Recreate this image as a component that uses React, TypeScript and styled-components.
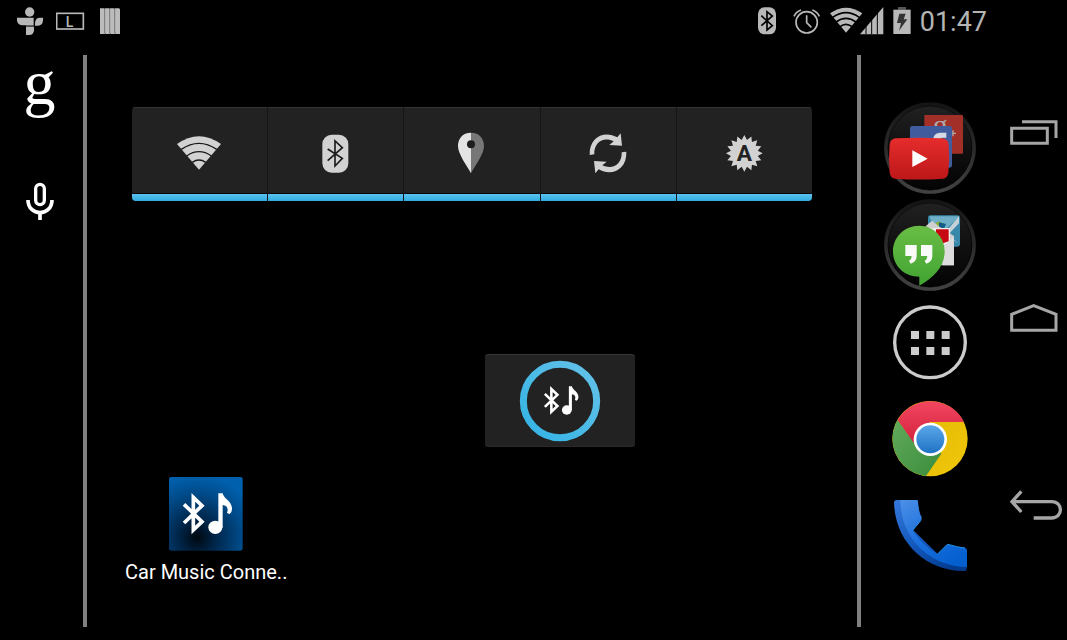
import React from "react";
import styled, { createGlobalStyle } from "styled-components";

const GlobalStyle = createGlobalStyle`
  *, *::before, *::after { box-sizing: border-box; }
  body { margin: 0; background: #000; font-family: Roboto, "Liberation Sans", sans-serif; }
  svg { display: block; flex: none; }
`;

const Screen = styled.div`
  display: flex;
  min-height: 100vh;
  background: #000;
  color: #fff;
`;

const Main = styled.main`
  flex: 1;
  min-width: 0;
  display: flex;
  flex-direction: column;
`;

const StatusBar = styled.header`
  display: flex;
  align-items: center;
  justify-content: space-between;
  height: 42px;
  padding: 0 13px 0 17px;
`;

const StatusGroup = styled.div<{ $gap: number }>`
  display: flex;
  align-items: center;
  gap: ${(p) => p.$gap}px;
`;

const Clock = styled.time`
  padding-top: 2px;
  font-size: 27px;
  line-height: 32px;
  color: #b4b4b4;
`;

const Workspace = styled.div`
  flex: 1;
  display: flex;
  margin: 13px 0;
`;

const IconButton = styled.button`
  display: flex;
  align-items: center;
  justify-content: center;
  padding: 0;
  border: 0;
  background: transparent;
  color: inherit;
  cursor: pointer;
`;

const SearchRail = styled.aside`
  width: 83px;
  padding: 6px 4px 0 0;
  display: flex;
  flex-direction: column;
  align-items: center;
  gap: 76px;
`;

const SearchButton = styled(IconButton)`
  height: 44px;
  font-family: "Liberation Serif", serif;
  font-size: 64px;
  line-height: 44px;
`;

const Desk = styled.section`
  flex: 1;
  min-width: 0;
  display: flex;
  flex-direction: column;
  align-items: flex-start;
  padding: 52px 45px 0 38px;
  border: solid #808080;
  border-width: 0 4px;
`;

const PowerWidget = styled.div`
  align-self: stretch;
  display: grid;
  grid-template-columns: repeat(5, 1fr);
  gap: 1px;
  height: 94px;
  margin-left: 7px;
  border-radius: 4px;
  overflow: hidden;
  background: #161616;
`;

const Toggle = styled(IconButton)`
  flex-direction: column;
  justify-content: space-between;
  padding-top: 12px;
  background: #222;
  border-top: 1px solid #343434;

  &::after {
    content: "";
    width: 100%;
    height: 8px;
    border-top: 1px solid #0c0808;
    background: linear-gradient(#5cc3ef, #30acdf);
  }
`;

const MusicWidget = styled(IconButton)`
  width: 150px;
  height: 93px;
  margin: 153px 0 30px calc(50% + 16px);
  border-radius: 4px;
  background: #222;
  box-shadow: inset 0 1px #383838, inset 0 -1px #2a2a2a;
`;

const Shortcut = styled(IconButton)`
  flex-direction: column;
  gap: 9px;
  font: 20px/24px Roboto, "Liberation Sans", sans-serif;
  white-space: nowrap;
  color: #fff;
`;

const Dock = styled.nav`
  width: 139px;
  padding: 2px 2px 0 0;
  display: flex;
  flex-direction: column;
  align-items: center;
  justify-content: center;
  gap: 5px;
`;

const NavBar = styled.nav`
  width: 67px;
  display: flex;
  flex-direction: column;
  justify-content: center;
  gap: 126px;
`;

type IconProps = { w: number; h: number; box: string; children: React.ReactNode };
const Icon = ({ w, h, box, children }: IconProps) => (
  <svg width={w} height={h} viewBox={box} fill="none" aria-hidden="true">
    {children}
  </svg>
);

const Note = () => (
  <g fill="#fff">
    <ellipse cx="319" cy="187" rx="21" ry="20" />
    <path d="M328 85H341C343 101 370 109 369 132Q369 142 362 147L354 144C360 127 351 121 341 120V188H328Z" />
  </g>
);

const BluetoothNote = () => (
  <>
    <path d="M225 118L279 170L253 195V97L279 122L225 174" stroke="#fff" strokeWidth="11" />
    <Note />
  </>
);

const FolderRing = ({ cy }: { cy: number }) => (
  <>
    <circle cx="180" cy={cy} r="132" fill="url(#folder)" stroke="url(#ring)" strokeWidth="11" />
    <circle cx="180" cy={cy} r="126" stroke="#050505" strokeWidth="2" />
  </>
);

const Gradients = () => (
  <svg width="0" height="0" style={{ position: "absolute" }} aria-hidden="true">
    <defs>
      <linearGradient id="ring" x1="0" y1="0" x2="0" y2="1">
        <stop stopColor="#141414" /><stop offset="1" stopColor="#414141" />
      </linearGradient>
      <linearGradient id="folder" x1="0" y1="0" x2="0" y2="1">
        <stop stopColor="#222" /><stop offset=".5" stopColor="#101010" /><stop offset="1" stopColor="#030303" />
      </linearGradient>
      <linearGradient id="tube" x1="0" y1="0" x2="0" y2="1">
        <stop stopColor="#e52d2c" /><stop offset="1" stopColor="#bd1719" />
      </linearGradient>
      <linearGradient id="talk" x1="0" y1="0" x2="0" y2="1">
        <stop stopColor="#69bd45" /><stop offset="1" stopColor="#41a332" />
      </linearGradient>
      <linearGradient id="cyan" x1="0" y1="1" x2="1" y2="0">
        <stop stopColor="#32b3e5" /><stop offset="1" stopColor="#65c2e8" />
      </linearGradient>
      <radialGradient id="app" cx=".38" cy=".82" r=".85">
        <stop stopColor="#000810" /><stop offset=".3" stopColor="#00264a" />
        <stop offset=".7" stopColor="#004a88" /><stop offset="1" stopColor="#0060ad" />
      </radialGradient>
      <linearGradient id="red" x1="0" y1="0" x2="0" y2="1">
        <stop stopColor="#f2465f" /><stop offset="1" stopColor="#d5233f" />
      </linearGradient>
      <linearGradient id="yellow" x1="0" y1="0" x2="1" y2="1">
        <stop stopColor="#e0b400" /><stop offset="1" stopColor="#f0c80c" />
      </linearGradient>
      <linearGradient id="green" x1="0" y1="0" x2="1" y2="1">
        <stop stopColor="#62aa5c" /><stop offset="1" stopColor="#3a8c3c" />
      </linearGradient>
      <linearGradient id="blue" x1="0" y1="0" x2="0" y2="1">
        <stop stopColor="#5aa6e8" /><stop offset="1" stopColor="#1f73c4" />
      </linearGradient>
      <linearGradient id="phone" x1="0" y1="0" x2=".7" y2="1">
        <stop stopColor="#4c8fe6" /><stop offset=".55" stopColor="#1a6fdd" /><stop offset="1" stopColor="#0560cf" />
      </linearGradient>
      <linearGradient id="phoneEdge" x1="0" y1="0" x2=".8" y2="1">
        <stop stopColor="#3579dc" /><stop offset=".5" stopColor="#1459bd" /><stop offset="1" stopColor="#033a8c" />
      </linearGradient>
    </defs>
  </svg>
);

const starPoints = Array.from({ length: 32 }, (_, i) => {
  const r = i % 2 ? 41 : 55;
  const a = (i * Math.PI) / 16;
  return `${1033 + r * Math.sin(a)},${175 - r * Math.cos(a)}`;
}).join(" ");

const StatusIcons = () => (
  <StatusBar>
    <StatusGroup $gap={13}>
      <Icon w={26} h={28} box="51 20 78 84">
        <g fill="#b8b8b8">
          <circle cx="89" cy="35" r="14" />
          <path d="M51 52H101V75H66Q52 74 51 60ZM105 76V68Q106 52 120 52H129V60Q128 76 114 76Z" />
          <path d="M78 80H102V90Q101 104 88 104H78Z" />
        </g>
        <path d="M78 77H101" stroke="#777" strokeWidth="4" />
      </Icon>
      <Icon w={31} h={28} box="168 20 93 84">
        <rect x="170" y="39" width="80" height="47" stroke="#b8b8b8" strokeWidth="5" />
        <text x="197" y="79" fill="#b8b8b8" fontFamily="Roboto, sans-serif" fontWeight="500" fontSize="42">L</text>
      </Icon>
      <Icon w={20} h={28} box="300 20 60 84">
        <path d="M300 24H312L314 27V24H327L329 27V24H342L344 27V24H357L360 27V101H347L345 98V101H332L330 98V101H317L315 98V101H300Z" fill="#bcbcbc" />
        <path d="M314 26V99M329 26V99M344 26V99" stroke="#555" strokeWidth="2" />
      </Icon>
    </StatusGroup>
    <StatusGroup $gap={9}>
      <Icon w={26} h={28} box="54 20 78 84">
        <rect x="54" y="21" width="54" height="81" rx="20" fill="#b8b8b8" />
        <path d="M64 46L97 76L81 89V34L97 47L64 76" stroke="#000" strokeWidth="5" />
      </Icon>
      <Icon w={28} h={28} box="160 20 84 84">
        <g stroke="#b8b8b8" strokeWidth="5">
          <circle cx="201" cy="66" r="32" />
          <path d="M201 45V67L215 81M163 48Q168 35 184 29M239 48Q234 35 218 29" />
        </g>
      </Icon>
      <Icon w={54} h={28} box="272 20 162 84">
        <path d="M320 97L272 39Q320 5 369 39Z" fill="#b8b8b8" />
        <path d="M280 51Q320 23 360 51M290 65Q320 43 350 65M302 79Q320 65 338 79" stroke="#000" strokeWidth="5" />
        <path d="M362 102L432 20V102Z" fill="#b8b8b8" />
        <path d="M380 70V102M397 52V102M414 35V102" stroke="#000" strokeWidth="3" />
      </Icon>
      <Icon w={18} h={28} box="458 20 54 84">
        <path d="M473 20H497V28H473Z" fill="#555" />
        <path d="M459 28H511V101H459Z" fill="#b8b8b8" />
        <path d="M477 40H496L490 57H501L476 91L482 68H470Z" fill="#333" />
      </Icon>
      <Clock>01:47</Clock>
    </StatusGroup>
  </StatusBar>
);

const Toggles = () => (
  <PowerWidget>
    <Toggle aria-label="Wi-Fi">
      <Icon w={60} h={60} box="150 75 180 180">
        <path d="M237 224L171 147Q237 100 303 147Z" fill="#d2d2d2" />
        <path d="M184 163Q237 127 290 163M200 183Q237 157 274 183M217 202Q237 188 257 202" stroke="#181818" strokeWidth="4" />
      </Icon>
    </Toggle>
    <Toggle aria-label="Bluetooth">
      <Icon w={60} h={60} box="558 75 180 180">
        <rect x="607" y="119" width="78" height="114" rx="28" fill="#d2d2d2" />
        <path d="M623 162L667 190L645 213V138L667 158L623 197" stroke="#1c1c1c" strokeWidth="5" />
      </Icon>
    </Toggle>
    <Toggle aria-label="Location">
      <Icon w={60} h={60} box="126 75 180 180">
        <path d="M213 113C187 113 174 132 174 153C174 178 200 210 213 235Z" fill="#e4e4e4" />
        <path d="M213 113C239 113 252 132 252 153C252 178 226 210 213 235Z" fill="#777" />
        <circle cx="213" cy="148" r="12" fill="#1e1e1e" />
      </Icon>
    </Toggle>
    <Toggle aria-label="Sync">
      <Icon w={60} h={60} box="534 75 180 180">
        <g fill="#d2d2d2">
          <path id="arrow" d="M569 180C567 125 614 105 652 127L662 115L666 152L628 150L641 139C610 124 581 143 583 178Z" />
          <use href="#arrow" transform="rotate(180 624 175)" />
        </g>
      </Icon>
    </Toggle>
    <Toggle aria-label="Brightness">
      <Icon w={60} h={60} box="942 75 180 180">
        <polygon points={starPoints} fill="#d2d2d2" />
        <text x="1033" y="198" textAnchor="middle" fill="#222" fontFamily="Roboto, sans-serif" fontWeight="700" fontSize="68">A</text>
      </Icon>
    </Toggle>
  </PowerWidget>
);

const DockIcons = () => (
  <Dock>
    <IconButton aria-label="Media folder">
      <Icon w={92} h={92} box="42 36 276 276">
        <FolderRing cy={174} />
        <rect x="163" y="75" width="116" height="116" rx="3" fill="#a33028" />
        <text x="188" y="134" fill="#aaa" fontFamily="Liberation Serif, serif" fontSize="90">g</text>
        <path d="M238 130H258M249 121V139" stroke="#aaa" strokeWidth="4" />
        <rect x="120" y="108" width="126" height="125" rx="7" fill="#405c9f" />
        <path d="M187 160Q187 128 210 128H229V143H216Q209 144 209 160Z" fill="#d5d9e4" />
        <path d="M76 145Q147 141 218 145Q234 147 236 164Q240 206 235 248Q233 264 218 266Q147 271 76 266Q61 264 59 248Q55 206 59 164Q61 147 76 145Z" fill="url(#tube)" />
        <path d="M127 181L173 206L127 231Z" fill="#fff" />
      </Icon>
    </IconButton>
    <IconButton aria-label="Messaging folder">
      <Icon w={92} h={92} box="42 327 276 276">
        <FolderRing cy={465} />
        <rect x="174" y="376" width="96" height="94" rx="7" fill="#3788aa" />
        <path d="M177 379H267L232 414H196Z" fill="#70afc8" />
        <path d="M267 378V400L240 428L246 443L267 463L244 445L230 423Z" fill="#c4d1d6" />
        <circle cx="207" cy="408" r="13" fill="#8aad38" />
        <path d="M207 397L228 402L222 416L207 412Z" fill="#155b88" />
        <path d="M165 410L186 392L208 410L252 438V526H172V410Z" fill="#cfcfcf" />
        <path d="M176 414H240V458L208 470L176 455Z" fill="#eee" />
        <path d="M198 418H236V454L219 460L198 438Z" fill="#c70712" />
        <path d="M251 440L218 474V526H251Z" fill="#ddd" />
        <path d="M147 407C190 407 224 440 224 484C224 530 191 563 148 587V560C102 560 69 527 69 484C69 441 104 407 147 407Z" fill="url(#talk)" />
        <path d="M106 465H140V499Q139 517 122 521L117 513Q125 508 125 498H106ZM153 465H187V499Q186 517 169 521L164 513Q172 508 172 498H153Z" fill="#f8fbf7" />
      </Icon>
    </IconButton>
    <IconButton aria-label="All apps">
      <Icon w={92} h={92} box="42 3 276 276">
        <circle cx="180" cy="142" r="106" stroke="#ccc" strokeWidth="10" />
        <path d="M123 108H147V132H123ZM169 108H193V132H169ZM215 108H239V132H215ZM123 156H147V180H123ZM169 156H193V180H169ZM215 156H239V180H215Z" fill="#ccc" />
      </Icon>
    </IconButton>
    <IconButton aria-label="Chrome">
      <Icon w={92} h={92} box="42 294 276 276">
        <circle cx="180" cy="431" r="113" fill="url(#yellow)" />
        <path d="M180 431L214 476L168 543A113 113 0 0 1 83 374L130 438Z" fill="url(#green)" />
        <path d="M83 375A113 113 0 0 1 282 381H180L131 443Z" fill="url(#red)" />
        <circle cx="181" cy="433" r="50" fill="#fff" />
        <circle cx="181" cy="433" r="42" fill="url(#blue)" />
      </Icon>
    </IconButton>
    <IconButton aria-label="Phone">
      <Icon w={92} h={92} box="42 585 276 276">
        <path d="M72 622Q73 615 80 615H142L150 660L130 706L204 778L280 765L290 815V824Q289 828 280 828C167 827 75 742 72 622Z" fill="url(#phoneEdge)" />
        <path d="M91 615H139Q144 615 144 620C144 640 149 655 155 667Q156 672 153 676L128 706C145 734 172 759 203 777L230 750Q233 747 238 749Q258 756 285 759Q291 760 291 766V816C178 815 91 728 91 615Z" fill="url(#phone)" />
        <path d="M153 676L128 706M203 777L230 750Q233 747 238 749Q258 756 285 759" stroke="#2093ed" strokeWidth="3" />
      </Icon>
    </IconButton>
  </Dock>
);

export default function App() {
  return (
    <Screen>
      <GlobalStyle />
      <Gradients />
      <Main>
        <StatusIcons />
        <Workspace>
          <SearchRail>
            <SearchButton aria-label="Google search">g</SearchButton>
            <IconButton aria-label="Voice search">
              <Icon w={30} h={40} box="75 393 90 120">
                <rect x="107" y="403" width="26" height="61" rx="13" stroke="#fff" strokeWidth="10" />
                <path d="M84 450C84 500 156 500 156 450M120 486V510" stroke="#fff" strokeWidth="11" />
              </Icon>
            </IconButton>
          </SearchRail>
          <Desk>
            <Toggles />
            <MusicWidget aria-label="Connect car music">
              <Icon w={150} h={93} box="45 42 450 279">
                <circle cx="270" cy="183" r="110" stroke="url(#cyan)" strokeWidth="21" />
                <g transform="translate(67 79) scale(.7)"><BluetoothNote /></g>
              </Icon>
            </MusicWidget>
            <Shortcut>
              <Icon w={74} h={74} box="180 36 222 222">
                <rect x="180" y="36" width="221" height="221" rx="7" fill="url(#app)" />
                <BluetoothNote />
              </Icon>
              Car Music Conne..
            </Shortcut>
          </Desk>
          <DockIcons />
        </Workspace>
      </Main>
      <NavBar>
        <IconButton aria-label="Recent apps">
          <Icon w={67} h={60} box="0 12 201 180">
            <path d="M35 85H142V130H35ZM66 65H168V114" stroke="#a6a6a6" strokeWidth="9" />
          </Icon>
        </IconButton>
        <IconButton aria-label="Home">
          <Icon w={67} h={60} box="0 570 201 180">
            <path d="M35 691V643L101 617L168 643V691Z" stroke="#a6a6a6" strokeWidth="9" />
          </Icon>
        </IconButton>
        <IconButton aria-label="Back">
          <Icon w={67} h={60} box="0 1128 201 180">
            <path d="M36 1205H155C190 1205 190 1254 155 1254H101M64 1174L36 1205L64 1236" stroke="#a6a6a6" strokeWidth="10" />
          </Icon>
        </IconButton>
      </NavBar>
    </Screen>
  );
}
